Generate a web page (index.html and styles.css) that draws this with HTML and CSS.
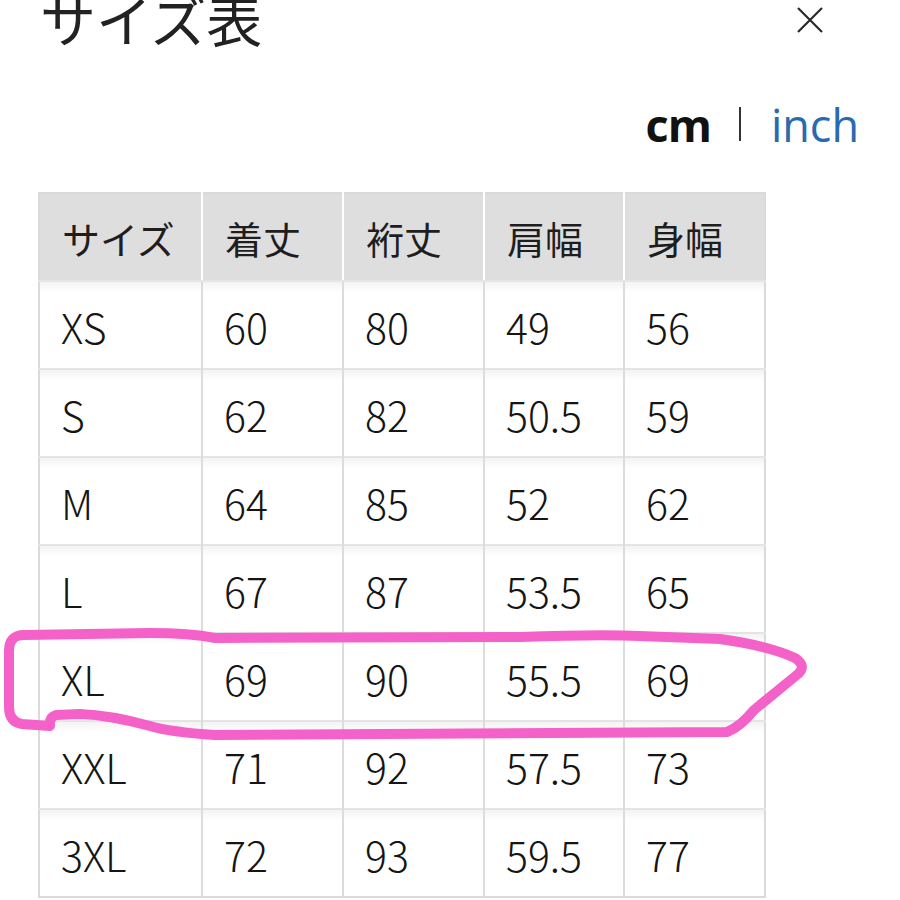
FILE: index.html
```html
<!DOCTYPE html>
<html lang="ja">
<head>
<meta charset="utf-8">
<title>サイズ表</title>
<link rel="stylesheet" href="styles.css">
</head>
<body>
<div class="page">
  <div class="top">
    <h1 class="title">サイズ表</h1>
    <svg class="close" width="26" height="26" viewBox="0 0 26 26" aria-label="閉じる">
      <path d="M1 1 L25 25 M25 1 L1 25" stroke="#2a2a2a" stroke-width="2.2" fill="none"/>
    </svg>
  </div>
  <div class="units">
    <span class="unit-cm">cm</span>
    <span class="sep"></span>
    <span class="unit-inch">inch</span>
  </div>
  <table class="size-table">
    <colgroup>
      <col class="c1"><col class="c2"><col class="c3"><col class="c4"><col class="c5">
    </colgroup>
    <thead>
      <tr><th>サイズ</th><th>着丈</th><th>裄丈</th><th>肩幅</th><th>身幅</th></tr>
    </thead>
    <tbody>
      <tr><td>XS</td><td>60</td><td>80</td><td>49</td><td>56</td></tr>
      <tr><td>S</td><td>62</td><td>82</td><td>50.5</td><td>59</td></tr>
      <tr><td>M</td><td>64</td><td>85</td><td>52</td><td>62</td></tr>
      <tr><td>L</td><td>67</td><td>87</td><td>53.5</td><td>65</td></tr>
      <tr><td>XL</td><td>69</td><td>90</td><td>55.5</td><td>69</td></tr>
      <tr><td>XXL</td><td>71</td><td>92</td><td>57.5</td><td>73</td></tr>
      <tr><td>3XL</td><td>72</td><td>93</td><td>59.5</td><td>77</td></tr>
    </tbody>
  </table>
  <svg class="marker" width="900" height="900" viewBox="0 0 900 900" aria-hidden="true">
    <path d="M24 635 L150 633 Q190 633 215 638 L520 637 Q600 634 640 636 L720 639 Q770 646 795 658 Q807 666 798 674 L754 710 Q740 727 727 732 L215 735 Q170 732 150 726 Q110 715 80 714 L56 715 Q49 717 50 726 L22 724 Q9 722 9 707 L9 651 Q9 635 24 635 Z"
      fill="none" stroke="#f462c9" stroke-width="10" stroke-linejoin="round" stroke-linecap="round"/>
  </svg>
</div>
</body>
</html>
```
FILE: styles.css
```css
html, body {
  margin: 0;
  padding: 0;
  background: #ffffff;
}
.page {
  position: relative;
  width: 900px;
  height: 900px;
  overflow: hidden;
  font-family: "Noto Sans CJK JP", "Noto Sans", sans-serif;
  color: #1c1c1c;
}
.top {
  display: flex;
  justify-content: space-between;
  align-items: flex-start;
  height: 56px;
  padding: 0 77px 0 40px;
}
.title {
  margin: -10px 0 0 0;
  font-size: 56px;
  line-height: 1;
  font-weight: 400;
  color: #222;
}
.close {
  margin-top: 7px;
  display: block;
}
.units {
  display: flex;
  justify-content: flex-end;
  align-items: center;
  padding-right: 41px;
  margin-top: 43px;
  height: 50px;
  font-family: "Open Sans", sans-serif;
  font-size: 45px;
  line-height: 1;
}
.unit-cm {
  font-weight: 700;
  color: #111;
  letter-spacing: -1px;
}
.sep {
  display: block;
  width: 2px;
  height: 34px;
  background: #333;
  margin: 0 30px 0 28px;
}
.unit-inch {
  color: #2a6ab0;
  font-weight: 400;
}
.size-table {
  margin: 43px 0 0 38px;
  width: 726px;
  table-layout: fixed;
  border-collapse: collapse;
  border: 2px solid #dadada;
}
.c1 { width: 163px; }
.c2 { width: 141px; }
.c3 { width: 141px; }
.c4 { width: 140px; }
.c5 { width: 141px; }
.size-table th {
  height: 86px;
  padding: 0 0 0 22px;
  text-align: left;
  font-weight: 400;
  font-size: 38px;
  background: #dedede;
  border-left: 2px solid #ffffff;
  border-bottom: 2px solid #e6e6e6;
  color: #1e1e1e;
}
.size-table th:first-child {
  border-left: 0;
}
.size-table td {
  height: 82px;
  padding: 4px 0 0 21px;
  text-align: left;
  font-family: "Noto Sans CJK JP", "Noto Sans", sans-serif;
  font-weight: 300;
  font-size: 41px;
  line-height: 1.2;
  border-left: 2px solid #dcdcdc;
  border-top: 2px solid #e4e4e4;
  color: #151515;
  background: linear-gradient(#f3f3f3, #ffffff 10px);
}
.size-table td:first-child {
  border-left: 0;
}
.marker {
  position: absolute;
  top: 0;
  left: 0;
  pointer-events: none;
}
```
